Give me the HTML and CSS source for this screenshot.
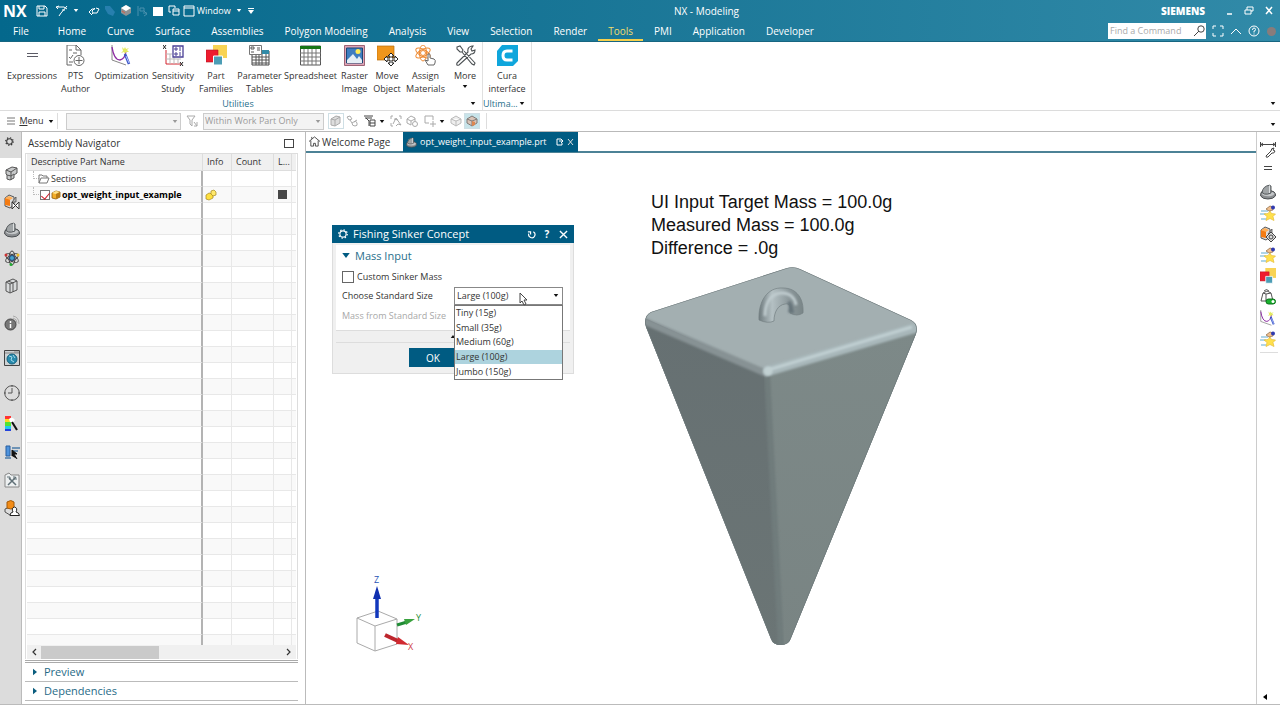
FILE: index.html
```html
<!DOCTYPE html>
<html lang="en">
<head>
<meta charset="utf-8">
<meta name="viewport" content="width=device-width, initial-scale=1">
<title>NX - Modeling</title>
<link rel="stylesheet" href="styles.css">
</head>
<body>
<svg class="defs" aria-hidden="true">
  <symbol id="gear" viewBox="0 0 16 16"><circle cx="8" cy="8" r="5" fill="none" stroke="currentColor" stroke-width="1.800"/><circle cx="8" cy="8" r="6.800" fill="none" stroke="currentColor" stroke-width="2" stroke-dasharray="2.200 3.140"/></symbol>
  <symbol id="caret" viewBox="0 0 6 4"><path d="M0 0h6L3 4z" fill="currentColor"/></symbol>
  <symbol id="caret-right" viewBox="0 0 5 8"><path d="M0 0l5 4-5 4z" fill="currentColor"/></symbol>
  <symbol id="part-gray" viewBox="0 0 16 16"><path d="M.7 10q0-2.500 3.500-3.500l6 0q5 1 5.200 3.500v2q-2 3-7.500 3T.7 12z" fill="#8a8d90" stroke="#4a4e51"/><path d="M1.500 10q1-2 4-2.500l5 0q4 1 4 2.500-2 2.300-6.500 2.300T1.500 10z" fill="#c3c6c8"/><path d="M2 8.500Q3 2 9.500 1.200l1.500.8v7q-4 1.800-6.500 1z" fill="#a0a4a6" stroke="#4a4e51" stroke-width=".9"/><path d="M9.500 1.500V9" stroke="#dcdfe0"/></symbol>
  <symbol id="families" viewBox="0 0 21 21"><path d="M7 0h14v13H7z" fill="#f8d354"/><path d="M0 5h12v12H0z" fill="#ee1c2e" stroke="#b41422" stroke-width=".6"/><path d="M7.500 11h9v9h-9z" fill="#4c9db5" stroke="#fff"/></symbol>
  <symbol id="opt" viewBox="0 0 21 21"><path d="M1 0v15l14 5" fill="none" stroke="#888"/><path d="M1 2q2 13 8 13 5-1 6-9" fill="none" stroke="#8c2aa2" stroke-width="1.300"/><path d="M11 2l2 2 1-2 1 2 3-1-2 2 2 2-3 0-1 2-1-2-3 1 2-2z" fill="#e3ea62"/><path d="M14 9l4 10" stroke="#3954c7" stroke-width="2.500"/><path d="M15 11l3 7" stroke="#b7c6ff"/></symbol>
  <symbol id="person-orange" viewBox="0 0 16 16"><path d="M1 9l5-2 5 2v4l-5 2-5-3z" fill="#ddd" stroke="#555"/><path d="M3 2q4-3 7 0v6q-3 2-7 0z" fill="#f28c17" stroke="#a45b0a"/><path d="M6 15.500q0-3 3-3.500-2-4 1.500-5 3.500 1 1.500 5 3 .5 3.500 3.500z" fill="#fff" stroke="#222"/></symbol>
  <symbol id="blocks" viewBox="0 0 16 16"><path d="M1 4l4-3 5 2v8l-4 3-5-2z" fill="#ddd" stroke="#555"/><path d="M1 4l5 1v7l-5-1z" fill="#f47b12"/><path d="M1 4l4-2 4 2-3 2z" fill="#ffad55"/><path d="M8 8l4-5v5z" fill="#bbb" stroke="#444" stroke-width=".7"/></symbol>
  <symbol id="tools" viewBox="0 0 21 21"><path d="M2 2l3-1 3 4-1 2-2 0-3-3zM7 7l10 12 2 1 1-2L9 6M2 18L13 7q-1-5 4-6l1 0-2 3 1 2 3-1q0 4-4 4L4 20q-3 1-2-2z" fill="#fff" stroke="#4b5053" stroke-width="1.100"/></symbol>
  <symbol id="star" viewBox="0 0 16 16"><path d="M1 6h7M0 9h6M1 14h5" stroke="#63acd2" stroke-width="1.200"/><path d="M10 6l1.500 2.500 4 .5-2.500 2.500 1 4-4-2-4 2 1-4-3-2.500 4-.5z" fill="#ffe04c" stroke="#e5bf3a" stroke-width=".7"/><path d="M6 4l4-3 3 1v3l-4 1z" fill="#efbf8e" stroke="#8b643e" stroke-width=".7"/><circle cx="13" cy="2.500" r="2" fill="#303bb0"/></symbol>
</svg>

<header class="app-header">
  <div class="titlebar">
    <div class="quick">
      <b class="nx">NX</b>
      <button aria-label="Save"><svg class="q" viewBox="0 0 12 12" fill="none" stroke="#fff"><path d="M1 1h8l2 2v8H1zM3 1v3h5V1M3 11V7h6v4"/></svg></button>
      <button aria-label="Undo" class="wide"><svg class="q" viewBox="0 0 12 12" fill="none" stroke="#fff"><path d="M3 1L0 2l2 2M1 2h7l3 2M11 1L5 8l-2 3M6 5h3"/></svg><svg class="c"><use href="#caret"/></svg></button>
      <button aria-label="Redraw"><svg class="q" viewBox="0 0 12 12" fill="none" stroke="#fff"><path d="M3 9L1 7l3-3h3M8 3l3 1-2 4H5l-1-2 3-3M5 8L3 10"/></svg></button>
      <button aria-label="Copy display"><svg class="q" viewBox="0 0 12 12"><path d="M1 1l5 0 5 6-2 4-5-2-3-5z" fill="#277fae"/></svg></button>
      <button aria-label="Shade"><svg class="q" viewBox="0 0 12 12"><path d="M1 3l5-3 5 3v5l-5 3-5-3z" fill="#8c9194"/><path d="M1 3l5-3 5 3-5 3z" fill="#fff"/><path d="M2 6l3 2" stroke="#d35f45"/></svg></button>
      <button aria-label="Repeat"><svg class="q" viewBox="0 0 12 12" fill="none" stroke="#4a91ae"><path d="M2 1v10M4 3h4v3H4zM7 8h4M8 6l3 3-3 2"/></svg></button>
      <button aria-label="Window color"><svg class="q" viewBox="0 0 12 12"><path d="M1 2h10v9H1z" fill="#fff"/></svg></button>
      <button aria-label="Cascade"><svg class="q" viewBox="0 0 12 12" fill="none" stroke="#fff"><path d="M1 7V1h6v2M5 4h6v6H5zM1 7h2M5 6h6"/></svg></button>
      <button class="window-btn"><svg class="q" viewBox="0 0 12 12" fill="none" stroke="#fff"><path d="M1 1h10v10H1zM1 3h10"/></svg>Window<svg class="c"><use href="#caret"/></svg></button>
      <button aria-label="Customize" class="more-q"><svg class="c2" viewBox="0 0 6 6"><path d="M0 0h6v1H0zM0 2h6L3 6z" fill="#fff"/></svg></button>
    </div>
    <h1>NX - Modeling</h1>
    <div class="brand"><b>SIEMENS</b>
      <button aria-label="Minimize"><svg class="q" viewBox="0 0 12 12"><path d="M4 9h5" stroke="#fff" stroke-width="1.500"/></svg></button>
      <button aria-label="Restore"><svg class="q" viewBox="0 0 12 12" fill="none" stroke="#fff"><path d="M4 5V2h6v4H8M2 5h6v4H2z"/></svg></button>
      <button aria-label="Close"><svg class="q" viewBox="0 0 12 12"><path d="M3 2l6 7M9 2L3 9" stroke="#fff" stroke-width="1.500"/></svg></button>
    </div>
  </div>
  <div class="menubar">
    <nav>
      <a href="#" class="file">File</a><a href="#">Home</a><a href="#">Curve</a><a href="#">Surface</a><a href="#">Assemblies</a><a href="#">Polygon Modeling</a><a href="#">Analysis</a><a href="#">View</a><a href="#">Selection</a><a href="#">Render</a><a href="#" class="on">Tools</a><a href="#">PMI</a><a href="#">Application</a><a href="#">Developer</a>
    </nav>
    <div class="find">
      <label class="search"><input type="text" placeholder="Find a Command" aria-label="Find a Command"><svg class="q" viewBox="0 0 12 12" fill="none" stroke="#444"><circle cx="8" cy="4" r="3.200"/><path d="M6 6l-5 5"/></svg></label>
      <button aria-label="Full screen"><svg class="q" viewBox="0 0 12 12" fill="none" stroke="#fff"><path d="M1 4V1h3M8 1h3v3M11 8v3H8M4 11H1V8"/></svg></button>
      <button aria-label="Collapse ribbon"><svg class="q" viewBox="0 0 12 12" fill="none" stroke="#fff"><path d="M1 9l5-5 5 5"/></svg></button>
      <button aria-label="Help"><svg class="q" viewBox="0 0 12 12" fill="none" stroke="#fff"><circle cx="6" cy="6" r="5"/><path d="M4.500 5q0-2 1.500-2t1.500 1.500Q7.500 6 6 6v1.500M6 8.500v1"/></svg></button>
      <i class="dot"></i>
    </div>
  </div>
</header>

<section class="ribbon" aria-label="Tools ribbon">
  <div class="group utilities">
    <div class="tools">
      <button><svg viewBox="0 0 21 21"><path d="M5 8.500h11M5 11.500h11" stroke="#5b5b66"/></svg>Expressions</button>
      <button><svg viewBox="0 0 21 21" fill="none" stroke="#666"><path d="M7 20H2V0h9l5 5v5M11 0v5h5M4 5h3M4 12l1.500 1.500L8 10M4 17h4M8 8h4"/><circle cx="14" cy="15.500" r="5"/><path d="M14 12v7M10.500 15.500h7"/></svg>PTS<br>Author</button>
      <button><svg><use href="#opt"/></svg>Optimization</button>
      <button><svg viewBox="0 0 21 21" fill="none"><path d="M3 5v14h15" stroke="#d3242f"/><path d="M7 9v10M11 9v10M15 14v5M3 9h6M3 14h15" stroke="#bbb"/><path d="M0 0l3 4M3 0L0 4M17 17l3 4M20 17l-3 4" stroke="#222"/><path d="M10 1h10v11H10z" fill="#fff" stroke="#4a3f96" stroke-width="1.300"/><path d="M12 3h2v2h-2zM12 8h2v2h-2zM16 3h2M16 5h2M16 8h2M16 10h2" stroke="#4a3f96"/></svg>Sensitivity<br>Study</button>
      <button><svg><use href="#families"/></svg>Part<br>Families</button>
      <button><svg viewBox="0 0 21 21" fill="none"><path d="M3 9v11h17V6h-7" fill="#fff" stroke="#444"/><path d="M13 5h7v4h-7z" fill="#328ba8"/><path d="M3 12h17M3 15h17M3 18h17M7 10v10M10 10v10M13 9v11M17 9v11" stroke="#555"/><path d="M.5.5h12v9H.5z" fill="#fff" stroke="#777"/><path d="M2 2h3v2H2zM2 7h3M8 3h3M8 5h3" stroke="#555"/></svg>Parameter<br>Tables</button>
      <button><svg viewBox="0 0 21 21"><path d="M.5 1h20v19H.5z" fill="#fff" stroke="#555"/><path d="M0 1h21v3H0z" fill="#187516"/><path d="M0 8h21M0 12h21M0 16h21M4 4v16M8 4v16M12 4v16M16 4v16" stroke="#777"/></svg>Spreadsheet</button>
      <button><svg viewBox="0 0 21 21"><path d="M.5.5h20v20H.5z" fill="#dfa4b5" stroke="#9d6576"/><path d="M2.500 3h16v15h-16z" fill="#3e7dc0" stroke="#194673"/><circle cx="14" cy="6.500" r="2.500" fill="#ffeb56"/><path d="M3 15l6-6 4 5 2-3 3 4v3H3z" fill="#e5eef5"/></svg>Raster<br>Image</button>
      <button><svg viewBox="0 0 21 21"><path d="M0 1h17v14H0z" fill="#f0961c" stroke="#b96d0d" stroke-width=".7"/><path d="M14 8l3 3h-2v2h3v-2l3 3-3 3v-2h-3v3h2l-3 3-3-3h2v-3h-3v2l-3-3 3-3v2h3v-2h-2z" fill="#fff" stroke="#222"/></svg>Move<br>Object</button>
      <button><svg viewBox="0 0 21 21" fill="none" stroke="#ee8b35"><ellipse cx="8" cy="8" rx="8" ry="3.500" transform="rotate(30 8 8)"/><ellipse cx="8" cy="8" rx="8" ry="3.500" transform="rotate(90 8 8)"/><ellipse cx="8" cy="8" rx="8" ry="3.500" transform="rotate(150 8 8)"/><circle cx="8" cy="8" r="2.500" fill="#fff"/><path d="M13 20l-3-5 3 1v-7q2-1 2 1v3l4 1q2 1 1 4l-1 2z" fill="#fff" stroke="#666"/></svg>Assign<br>Materials</button>
      <button><svg><use href="#tools"/></svg>More<svg class="c k"><use href="#caret"/></svg></button>
    </div>
    <div class="group-label">Utilities<svg class="c k end"><use href="#caret"/></svg></div>
  </div>
  <div class="group cura">
    <div class="tools"><button><svg viewBox="0 0 21 21"><path d="M5 0h16v16l-5 5H0V6z" fill="#0fa6dc"/><path d="M15.500 6H10q-4 0-4 4.500t4 4.500h5.500" fill="none" stroke="#fff" stroke-width="3"/></svg>Cura<br>interface</button></div>
    <div class="group-label">Ultima...<svg class="c k end"><use href="#caret"/></svg></div>
  </div>
  <svg class="c k ribbon-end"><use href="#caret"/></svg>
</section>

<section class="selbar" aria-label="Selection bar">
  <button class="menu-btn"><svg viewBox="0 0 8 8"><path d="M0 1h8M0 4h8M0 7h8" stroke="#777"/></svg><span><u>M</u>enu</span><svg class="c k"><use href="#caret"/></svg></button>
  <span class="combo first"><select disabled aria-label="Type filter"><option></option></select><svg class="c"><use href="#caret"/></svg></span>
  <svg class="s" viewBox="0 0 12 12" fill="none" stroke="#aaa"><path d="M1 1h8L6 5v6L4 9V5zM8 7l3 4M11 7v4H8"/></svg>
  <span class="combo second"><select disabled aria-label="Selection scope"><option>Within Work Part Only</option></select><svg class="c"><use href="#caret"/></svg></span>
  <div class="sel-icons">
    <button class="boxed" aria-label="Solid"><svg class="s" viewBox="0 0 12 12" stroke="#aaa"><path d="M1 4l5-3 4 1v6l-5 3-4-1z" fill="#ddd"/><path d="M1 4l4 1v6M5 5l5-3" fill="none"/></svg></button>
    <button aria-label="Link"><svg class="s" viewBox="0 0 12 12" fill="none" stroke="#aaa"><path d="M1 2l3-1 2 3-3 1zM4 5l2 3 5-3M6 8q0 3 3 3t2-3-3-1"/></svg></button>
    <button class="drop" aria-label="Filter"><svg class="s" viewBox="0 0 12 12" fill="none" stroke="#444"><path d="M0 1h9M1 3h7M2 3l3 3v5M6 5h5v6H6zM6 8h5"/></svg><svg class="c k"><use href="#caret"/></svg></button>
    <button aria-label="Deselect"><svg class="s" viewBox="0 0 12 12" fill="none" stroke="#aaa"><path d="M1 4V1h2M1 8v3h2M9 1h2v3M3 9l3-6 5 7-3-1-2 2M4 4l4 1"/></svg></button>
    <button aria-label="Find in navigator"><svg class="s" viewBox="0 0 12 12" fill="none" stroke="#aaa"><path d="M1 4l4-3 4 2v3M1 4v4l4 2M1 4l4 2v4M5 6l4-2"/><circle cx="9" cy="9" r="2.500"/></svg></button>
    <button class="drop" aria-label="Snap"><svg class="s" viewBox="0 0 12 12" fill="none" stroke="#aaa"><path d="M1 8V1h8v4M1 8h4M9 6v6M6 9h6"/></svg><svg class="c k"><use href="#caret"/></svg></button>
    <button aria-label="Wireframe"><svg class="s" viewBox="0 0 12 12" fill="#eee" stroke="#bbb"><path d="M1 4l5-3 5 3v4l-5 3-5-3zM1 4l5 2 5-2M6 6v5"/></svg></button>
    <button class="boxed active" aria-label="Shaded"><svg class="s" viewBox="0 0 12 12" stroke="#807b78"><path d="M1 4l5-3 5 3v4l-5 3-5-3z" fill="#d8c4b8"/><path d="M1 4l5 2 5-2M6 6v5" fill="none"/><path d="M6 6l3 1v3l-3 1z" fill="#dd8750" stroke="none"/></svg></button>
  </div>
  <svg class="c k bar-end"><use href="#caret"/></svg>
</section>

<main>
  <aside class="rail" aria-label="Resource bar">
    <button class="cog" aria-label="Settings"><svg><use href="#gear"/></svg></button>
    <button class="tab" aria-label="Assembly Navigator"><svg viewBox="0 0 16 16" stroke="#555"><path d="M2 5l6-3 5 1v5l-3 2v3l-4 2-3-1v-4l-1-1z" fill="#c8cacb"/><path d="M2 5l5 2v4M7 7l6-4M3 10l4 1v4M7 11l3-2" fill="none"/></svg></button>
    <button aria-label="Constraint Navigator"><svg viewBox="0 0 16 16"><use href="#blocks" width="16" height="16"/><path d="M8 8l7 7V8l-7 7z" fill="#fff" stroke="#333"/></svg></button>
    <button aria-label="Part Navigator"><svg><use href="#part-gray"/></svg></button>
    <button aria-label="Reuse Library"><svg viewBox="0 0 16 16" fill="none" stroke="#444"><ellipse cx="8" cy="8" rx="7" ry="3" transform="rotate(30 8 8)"/><ellipse cx="8" cy="8" rx="7" ry="3" transform="rotate(90 8 8)"/><ellipse cx="8" cy="8" rx="7" ry="3" transform="rotate(150 8 8)"/><circle cx="8" cy="8" r="2.500" fill="#45a3cb" stroke="#247"/><circle cx="2" cy="5" r="1.500" fill="#c33" stroke="none"/><circle cx="14" cy="5" r="1.500" fill="#eb2" stroke="none"/><circle cx="7" cy="14.500" r="1.500" fill="#2a3" stroke="none"/></svg></button>
    <button aria-label="Library"><svg viewBox="0 0 16 16" stroke="#555"><path d="M2 4l7-3 4 2v9l-7 3-4-2z" fill="#d9dbdc"/><path d="M2 4l4 2v9M6 6l7-3M9 5v9M4 3l5 2" fill="none"/></svg></button>
    <button class="tall lead" aria-label="HD3D"><svg viewBox="0 0 16 16"><circle cx="6.500" cy="9.500" r="5.500" fill="#777" stroke="#444"/><path d="M6.500 9v4M6.500 6v2" stroke="#fff" stroke-width="1.500"/><path d="M9 1q6 1 6 8M9 3q4 1 4 5" fill="none" stroke="#aaa"/></svg></button>
    <button class="tall" aria-label="Web Browser"><svg viewBox="0 0 16 16"><path d="M.5.5h15v15H.5z" fill="#cdd2d4" stroke="#444"/><path d="M1 3h14M10 2h5" stroke="#888"/><circle cx="8" cy="9" r="5" fill="#278aad" stroke="#15617d"/><path d="M5 6l3 1-1 3 3 2M9 5l2 3" stroke="#a6dbe9" fill="none"/></svg></button>
    <button class="tall" aria-label="History"><svg viewBox="0 0 16 16" fill="none" stroke="#555"><circle cx="8" cy="8" r="7.300"/><path d="M8 3v5H4M8 0v2M8 14v2M0 8h2M14 8h2"/></svg></button>
    <button aria-label="Process Studio"><svg viewBox="0 0 16 16"><path d="M1 0h6v3H1z" fill="#f33"/><path d="M1 3h6v3H1z" fill="#ffda22"/><path d="M1 6h6v4H1z" fill="#51e333"/><path d="M1 10h6v3H1z" fill="#22c9ec"/><path d="M1 13h6v2H1z" fill="#2443dc"/><path d="M5 3q3-3 6 1l-2 3-3-1z" fill="#fff"/><path d="M8 6l5 8" stroke="#111" stroke-width="2"/></svg></button>
    <button aria-label="Roles"><svg viewBox="0 0 16 16"><path d="M2 2h4v10H2z" fill="#4e93dd" stroke="#275fa0"/><path d="M1 14h6M8 4h8M8 7h6" stroke="#497ba8" stroke-width="1.300"/><path d="M8 12V6l5 4h-3l3 5" fill="#111" stroke="#111"/></svg></button>
    <button aria-label="System tools"><svg viewBox="0 0 16 16"><path d="M1 3l4-2 2 2h8v12H1z" fill="#edf0f1" stroke="#888"/><path d="M5 6l7 7M12 5l-8 8" stroke="#607077" stroke-width="1.500"/><path d="M3 5h3v3M10 4v3h3" fill="none" stroke="#607077"/></svg></button>
    <button aria-label="User role"><svg><use href="#person-orange"/></svg></button>
  </aside>

  <aside class="navigator">
    <div class="nav-title"><h2>Assembly Navigator</h2><button aria-label="Maximize panel"></button></div>
    <div class="tree">
      <div class="rows">
      <table>
        <colgroup><col><col class="w-info"><col class="w-count"><col class="w-l"><col class="w-end"></colgroup>
        <thead><tr><th>Descriptive Part Name</th><th>Info</th><th>Count</th><th>L...</th><th></th></tr></thead>
        <tbody>
          <tr><td><span class="cell"><i class="branch"></i><svg class="folder" viewBox="0 0 12 10" fill="none" stroke="#777"><path d="M1 9V1h3l1 1h4v2M1 9l2-5h8L9 9z"/></svg>Sections</span></td><td></td><td></td><td></td><td></td></tr>
          <tr><td><span class="cell strong"><i class="branch"></i><input type="checkbox" checked aria-label="opt_weight_input_example"><svg viewBox="0 0 10 10"><path d="M1 3l4-2 4 1v5L5 9 1 8z" fill="#f4ae2a" stroke="#8b5b0c" stroke-width=".8"/><path d="M1 3l4 1 4-2-4-1z" fill="#ffe28a"/><path d="M5 4v5l4-2V2z" fill="#b97a14"/></svg>opt_weight_input_example</span></td><td><svg class="info" viewBox="0 0 12 12"><path d="M1 6l3-2 4 1v4l-4 2-3-1z" fill="#ffe040" stroke="#a4861f" stroke-width=".7"/><path d="M6 2l3-1 2 2v3l-3 1-2-2z" fill="#ffe96d" stroke="#a4861f" stroke-width=".7"/></svg></td><td></td><td><i class="swatch"></i></td><td></td></tr>
          <tr><td><td><td><td><td></tr>
          <tr><td><td><td><td><td></tr>
          <tr><td><td><td><td><td></tr>
          <tr><td><td><td><td><td></tr>
          <tr><td><td><td><td><td></tr>
          <tr><td><td><td><td><td></tr>
          <tr><td><td><td><td><td></tr>
          <tr><td><td><td><td><td></tr>
          <tr><td><td><td><td><td></tr>
          <tr><td><td><td><td><td></tr>
          <tr><td><td><td><td><td></tr>
          <tr><td><td><td><td><td></tr>
          <tr><td><td><td><td><td></tr>
          <tr><td><td><td><td><td></tr>
          <tr><td><td><td><td><td></tr>
          <tr><td><td><td><td><td></tr>
          <tr><td><td><td><td><td></tr>
          <tr><td><td><td><td><td></tr>
          <tr><td><td><td><td><td></tr>
          <tr><td><td><td><td><td></tr>
          <tr><td><td><td><td><td></tr>
          <tr><td><td><td><td><td></tr>
          <tr><td><td><td><td><td></tr>
          <tr><td><td><td><td><td></tr>
          <tr><td><td><td><td><td></tr>
          <tr><td><td><td><td><td></tr>
          <tr><td><td><td><td><td></tr>
          <tr><td><td><td><td><td></tr>
        </tbody>
      </table>
      </div>
      <div class="scroll"><svg viewBox="0 0 6 8"><path d="M5 1L2 4l3 3" fill="none" stroke="#333" stroke-width="1.200"/></svg><div class="track"><i></i></div><svg viewBox="0 0 6 8"><path d="M1 1l3 3-3 3" fill="none" stroke="#333" stroke-width="1.200"/></svg></div>
    </div>
    <button class="fold top"><svg><use href="#caret-right"/></svg>Preview</button>
    <button class="fold"><svg><use href="#caret-right"/></svg>Dependencies</button>
  </aside>

  <section class="graphics">
    <div class="tabs">
      <button><svg viewBox="0 0 12 12" fill="none" stroke="#444"><path d="M0 6l6-5 6 5M2 5v6h3V8h2v3h3V5M3 3V1"/></svg>Welcome Page</button>
      <button class="on"><svg><use href="#part-gray"/></svg><span>opt_weight_input_example.prt</span><svg class="x" viewBox="0 0 8 8" fill="none" stroke="#fff"><path d="M5 1H1v6h5V5M3 3h4M5 1l2 2-2 2"/></svg><svg class="x" viewBox="0 0 8 8"><path d="M1 1l5 6M6 1L1 7" stroke="#ddd"/></svg></button>
    </div>
    <div class="canvas">
      <p class="note">UI Input Target Mass = 100.0g<br>Measured Mass = 100.0g<br>Difference = .0g</p>
      <svg class="model" viewBox="640 260 284 392" role="img" aria-label="Sinker model">
        <defs>
          <linearGradient id="lf" x1="0" y1="0" x2="0" y2="1"><stop offset="0" stop-color="#667072"/><stop offset="1" stop-color="#6b7575"/></linearGradient>
          <linearGradient id="rf" x1="0" y1="0" x2="0" y2="1"><stop offset="0" stop-color="#7d8988"/><stop offset="1" stop-color="#798483"/></linearGradient>
          <linearGradient id="ring" x1="0" x2="1" y1="0" y2="0"><stop offset="0" stop-color="#707c7f"/><stop offset=".3" stop-color="#b4c0c3"/><stop offset=".7" stop-color="#8a9699"/><stop offset="1" stop-color="#7a8688"/></linearGradient>
          <filter id="b1" x="-20%" y="-20%" width="140%" height="140%"><feGaussianBlur stdDeviation="1.300"/></filter>
          <clipPath id="body"><path d="M651 312L787 268q7-2 13 1l111 51q8 4 5 14L791 638q-2 7-10 7t-10-6L646 327q-3-11 5-15z"/></clipPath>
        </defs>
        <g clip-path="url(#body)">
          <path d="M640 260h284v392H640z" fill="#a3afb1"/>
          <path d="M640 316l128 58 14 280H640z" fill="url(#lf)"/>
          <path d="M768 374l156-48-120 326h-23z" fill="url(#rf)"/>
          <path d="M767 372l14 275" stroke="#707b7c" stroke-width="6" filter="url(#b1)"/>
          <path d="M644 321l124 53" stroke="#879294" stroke-width="7" filter="url(#b1)"/>
          <path d="M768 371l147-43" stroke="#a8b7ba" stroke-width="10" stroke-linecap="round" filter="url(#b1)"/>
          <path d="M768 370l144-43" stroke="#c1d0d3" stroke-width="3" filter="url(#b1)"/>
          <circle cx="768" cy="371" r="4.500" fill="#c1d0d2" filter="url(#b1)"/>
          <path d="M651 312L787 268q7-2 13 1l111 51q8 4 5 14L791 638q-2 7-10 7t-10-6L646 327q-3-11 5-15z" fill="none" stroke="#6e797b" stroke-width="1.200"/>
        </g>
        <path d="M759 320c-1-18 8-33 24-32 14 0 21 11 20 25q-6 4-13 0c1-7-1-10-5-9-7 1-11 8-11 17q-6 3-15-1z" fill="url(#ring)" stroke="#748083" stroke-width=".7"/>
        <path d="M765 316c0-13 6-23 17-23 8 0 13 5 14 12" fill="none" stroke="#c0cccf" stroke-width="3" filter="url(#b1)"/>
        <path d="M787 303q3 2 1 9 3 2 6 1-1-9-4-12z" fill="#66747a" filter="url(#b1)"/>
      </svg>
      <svg class="triad" viewBox="0 0 76 80" role="img" aria-label="View triad">
        <path d="M6 40l21-7 19 8-22 7zM6 40v25l18 8V48M24 73l22-7V41" fill="#fff" stroke="#aaa"/>
        <path d="M26 40V19" stroke="#1238bd" stroke-width="3.500"/><path d="M26 8l4 13h-8z" fill="#1030b0"/>
        <path d="M46 47l10-3" stroke="#218c36" stroke-width="3"/><path d="M53 41l11 0-9 6z" fill="#39a23e"/>
        <path d="M34 57l13 6" stroke="#bd262d" stroke-width="4"/><path d="M47 59l11 8-13-1z" fill="#d12a30"/>
        <text x="23" y="5" fill="#2a55b5">Z</text><text x="65" y="43" fill="#2b9140">Y</text><text x="57" y="72" fill="#cf4144">X</text>
      </svg>

      <form class="dialog" onsubmit="return false">
        <header><svg><use href="#gear"/></svg><h2>Fishing Sinker Concept</h2>
          <button type="button" aria-label="Reset"><svg viewBox="0 0 10 10"><path d="M7 2a3.500 3.500 0 1 1-5 2M1 2h3v3" fill="none" stroke="#fff" stroke-width="1.300"/></svg></button><button type="button" aria-label="Help">?</button><button type="button" aria-label="Close"><svg viewBox="0 0 10 10"><path d="M1 1l8 8M9 1L1 9" stroke="#fff" stroke-width="1.500"/></svg></button></header>
        <div class="body">
          <h3><svg class="c"><use href="#caret"/></svg>Mass Input</h3>
          <label class="check"><input type="checkbox">Custom Sinker Mass</label>
          <div class="row"><label for="size">Choose Standard Size</label>
            <span class="size"><select id="size"><option>Large (100g)</option></select><svg class="c k"><use href="#caret"/></svg>
              <ul role="listbox" aria-label="Standard sizes"><li role="option">Tiny (15g)</li><li role="option">Small (35g)</li><li role="option">Medium (60g)</li><li role="option" aria-selected="true">Large (100g)</li><li role="option">Jumbo (150g)</li></ul>
              <svg class="cursor" viewBox="0 0 9 14"><path d="M1 1v10l2-2 2 4 2-1-2-4h3z" fill="#fff" stroke="#444"/></svg>
            </span></div>
          <p class="dim">Mass from Standard Size</p>
        </div>
        <div class="strip"><svg class="c k"><use href="#caret"/></svg></div>
        <footer><button class="ok">OK</button></footer>
      </form>
    </div>
  </section>

  <aside class="dock" aria-label="Side toolbar">
    <button aria-label="Measure"><svg viewBox="0 0 16 16" fill="none" stroke="#444"><path d="M.5 0v5M15.500 0v5M1 2.500h14M3 1L1 2.500 3 4M13 1l2 1.500L13 4"/><path d="M6 14l5-5q0-3 3-3l-1 2 2 1q-1 3-3 2l-4 4q-2 1-2-1z"/></svg></button>
    <button aria-label="Expressions"><svg viewBox="0 0 16 16"><path d="M4 3.500h8M4 6.500h8" stroke="#444"/></svg></button>
    <button aria-label="Part"><svg><use href="#part-gray"/></svg></button>
    <button aria-label="Effect one"><svg><use href="#star"/></svg></button>
    <button aria-label="Move component"><svg viewBox="0 0 16 16"><use href="#blocks" width="16" height="16"/><path d="M11 6l5 5-5 5-5-5z" fill="#ddd" stroke="#444"/><circle cx="11" cy="11" r="2" fill="none" stroke="#444"/></svg></button>
    <button aria-label="Effect two"><svg><use href="#star"/></svg></button>
    <button aria-label="Part Families"><svg><use href="#families"/></svg></button>
    <button aria-label="Toggle weight"><svg viewBox="0 0 16 16"><path d="M1 12l2-8 4-2 4 2 2 8zM3 4l3 1 5-1M6 5v7M4 2q2.500-3 5 0" fill="#fff" stroke="#555"/><rect x="6" y="10" width="9.500" height="5" rx="2.500" fill="#18b12d" stroke="#0a6f18"/><circle cx="13" cy="12.500" r="1.500" fill="#fff"/></svg></button>
    <button aria-label="Optimization"><svg><use href="#opt"/></svg></button>
    <button aria-label="Effect three"><svg><use href="#star"/></svg></button>
    <i class="rule"></i>
    <svg class="dock-end" viewBox="0 0 4 6"><path d="M4 0v6L0 3z"/></svg>
  </aside>
</main>
<footer class="status"></footer>
</body>
</html>
```
FILE: styles.css
```css
* { box-sizing: border-box; }
html, body { height: 100%; }
body {
  margin: 0;
  display: flex;
  flex-direction: column;
  background: #fff;
  color: #333;
  font: 9px/12px "Open Sans", "Noto Sans", sans-serif;
  overflow: hidden;
}
h1, h2, h3, p, ul { margin: 0; padding: 0; font-weight: 400; }
button { margin: 0; padding: 0; border: 0; background: none; color: inherit; font: inherit; display: flex; align-items: center; justify-content: center; }
a { color: inherit; text-decoration: none; }
svg { display: block; flex: none; }
input, select { font: inherit; color: inherit; margin: 0; }
.defs { position: absolute; width: 0; height: 0; }
.c { width: 6px; height: 3px; }
.k { color: #111; }
.q, .s { width: 12px; height: 12px; }

/* header */
.app-header { background: linear-gradient(90deg, #04688c, #1d7999 55%, #318aa8); color: #fff; border-bottom: 1px solid #176681; font-size: 10px; line-height: 14px; }
.titlebar { height: 21px; display: flex; align-items: center; }
.quick { display: flex; align-items: center; gap: 4px; width: 252px; }
.nx { font-size: 16px; width: 28px; margin: 0 5px 0 3px; }
.quick .wide { gap: 5px; margin: 0 5px 0 4px; }
.quick button + button { flex: none; }
.window-btn { gap: 2px; margin-left: -1px; font-size: 9px; }
.window-btn .c { margin-left: 3px; }
.more-q { margin-left: 2px; }
.c2 { width: 6px; height: 6px; }
.titlebar h1 { flex: 1; text-align: center; font-size: 10px; }
.brand { display: flex; align-items: center; gap: 8px; padding-right: 5px; }
.brand b { font-weight: 800; margin-right: 10px; }
.menubar { height: 20px; display: flex; justify-content: space-between; }
nav { display: flex; gap: 1px; }
nav a { padding: 3px 10px 0; height: 20px; }
nav .file { padding: 3px 18px 0 13px; }
nav .on { color: #f3dd6d; border-bottom: 2px solid #f5d04c; }
.find { display: flex; align-items: center; gap: 6px; padding-right: 4px; }
.search { display: flex; align-items: center; width: 98px; height: 16px; background: #fff; padding-right: 1px; }
.search input { flex: 1; width: 0; border: 0; padding: 0 2px; background: none; font-size: 9px; color: #333; outline: 0; }
.search input::placeholder { color: #aaa; opacity: 1; }
.dot { width: 9px; height: 9px; border-radius: 50%; background: #887c7b; margin-left: 1px; }

/* ribbon */
.ribbon { flex: none; height: 69px; display: flex; border-bottom: 1px solid #dcdcdc; }
.group { display: flex; flex-direction: column; justify-content: space-between; border-right: 1px solid #e0e0e0; }
.utilities { padding-left: 6px; }
.tools { display: grid; }
.utilities .tools { grid-template-columns: 52px 35px 57px 46px 40px 47px 55px 33px 32px 45px 34px; }
.cura { width: 49px; }
.tools button { flex-direction: column; justify-content: flex-start; padding-top: 3px; line-height: 13px; white-space: nowrap; }
.tools button > svg:first-child { width: 21px; height: 21px; margin-bottom: 3px; }
.tools .c { margin-top: 3px; }
.group-label { display: flex; align-items: center; justify-content: center; color: #28708c; line-height: 13px; }
.group-label .end { margin-left: auto; margin-right: 6px; }
.utilities .group-label::before { content: ""; margin-left: auto; }
.ribbon-end, .bar-end { margin: auto 4px 5px auto; }

/* selection bar */
.selbar { flex: none; height: 21px; display: flex; align-items: center; border-bottom: 1px solid #b9b9b9; }
.menu-btn { gap: 4px; width: 58px; height: 16px; padding-left: 4px; border-right: 1px solid #ddd; margin-right: 8px; }
.menu-btn > svg:first-child { width: 8px; height: 8px; }
.combo { position: relative; display: flex; height: 17px; }
.combo select { appearance: none; width: 100%; border: 1px solid #ccc; background: #f3f3f3; color: #9b9b9b; padding: 0 1px; opacity: 1; }
.combo .c { position: absolute; right: 3px; top: 7px; color: #999; }
.first { width: 115px; }
.second { width: 121px; }
.selbar > .s { margin: 0 5px; }
.sel-icons { display: flex; align-items: center; margin-left: 4px; padding-right: 6px; border-right: 1px solid #ddd; }
.sel-icons button { width: 16px; height: 16px; }
.sel-icons .drop { width: 28px; gap: 3px; }
.sel-icons .boxed { border: 1px solid #cfdfe5; }
.sel-icons .active { background: #c8e4ea; }

/* work area */
main { flex: 1; min-height: 0; display: flex; border-bottom: 1px solid #bbb; }
.status { flex: none; height: 15px; }
.rail { width: 22px; flex: none; background: #dcdcdc; border-right: 1px solid #bbb; }
.rail button { width: 100%; height: 28px; padding-left: 3px; }
.rail svg { width: 16px; height: 16px; }
.rail .cog { height: 26px; padding: 0 2px 8px 0; }
.rail .cog svg { width: 9px; height: 9px; }
.rail .tab { height: 30px; background: #fff; padding-left: 2px; }
.rail .tall { height: 35px; }
.rail .lead { margin-top: 5px; }

.navigator { width: 284px; flex: none; display: flex; flex-direction: column; padding: 0 7px 3px 3px; border-right: 1px solid #bbb; }
.nav-title { display: flex; align-items: center; height: 21px; padding: 1px 4px 0 3px; justify-content: space-between; }
.nav-title h2 { font-size: 10px; }
.nav-title button { width: 10px; height: 9px; border: 1px solid #444; }
.tree { flex: 1; min-height: 0; display: flex; flex-direction: column; border: 1px solid #ddd; border-bottom: 0; padding: 0 1px; }
.rows { flex: 1; min-height: 0; overflow: hidden; }
table { width: 100%; table-layout: fixed; border-collapse: separate; border-spacing: 0; }
.w-info { width: 29px; }
.w-count { width: 42px; }
.w-l { width: 18px; }
.w-end { width: 4px; }
th { height: 17px; background: #f0f0f0; padding: 0 0 0 4px; text-align: left; font-weight: 400; border-right: 1px solid #ddd; border-bottom: 1px solid #ddd; white-space: nowrap; }
td { height: 16px; padding: 0; border-right: 1px solid #e8e8e8; border-bottom: 1px solid #e8e8e8; }
tbody tr:nth-child(even) { background: #f9f9f9; }
td:first-child { border-right: 2px solid #b3b3b3; }
th:last-child { padding: 0; }
th:last-child, td:last-child { border-right: 0; }
.cell { display: flex; align-items: center; gap: 1px; padding-left: 6px; height: 15px; }
.cell svg { width: 10px; height: 10px; }
.cell .folder { width: 12px; margin-left: -2px; }
.branch { width: 6px; height: 8px; border-bottom: 1px dotted #bbb; border-left: 1px dotted #bbb; margin-bottom: 7px; }
.strong { font-weight: 700; color: #000; }
.cell input { appearance: none; width: 10px; height: 10px; border: 1px solid #777; background: #fff; display: grid; place-items: center; }
.cell input::before { content: ""; width: 4px; height: 7px; border: solid #d21f2b; border-width: 0 1px 1px 0; transform: rotate(40deg); }
.info { width: 12px; height: 12px; margin-left: 2px; }
.swatch { display: block; width: 9px; height: 9px; background: #484848; margin-left: 4px; }
.scroll { height: 14px; display: flex; align-items: center; gap: 4px; padding: 0 4px; background: #f0f0f0; }
.scroll svg { width: 6px; height: 8px; }
.track { flex: 1; height: 13px; }
.track i { display: block; width: 49%; height: 100%; background: #cacaca; }
.fold { height: 19px; justify-content: flex-start; gap: 7px; padding-left: 8px; color: #1f6a87; font-size: 11px; border-bottom: 1px solid #bbb; }
.fold.top { margin-top: 1px; height: 22px; border-top: 3px double #aaa; }
.fold svg { width: 4px; height: 8px; color: #0a5d7e; }

.graphics { flex: 1; min-width: 0; display: flex; flex-direction: column; }
.tabs { height: 21px; flex: none; display: flex; border-bottom: 2px solid #4c8296; font-size: 10px; }
.tabs button { padding: 0 3px; gap: 2px; width: 97px; justify-content: flex-start; white-space: nowrap; }
.tabs svg { width: 11px; height: 11px; }
.tabs .on { width: 175px; height: 20px; background: #005b82; color: #fff; gap: 3px; font-size: 9px; }
.tabs .on span { flex: 1; text-align: left; }
.tabs .x { width: 8px; height: 8px; }
.canvas { flex: 1; position: relative; background: #fff; overflow: hidden; }
.note { position: absolute; left: 345px; top: 38px; font: 18px/23px "Liberation Sans", Arial, sans-serif; color: #111; white-space: nowrap; }
.model { position: absolute; left: 334px; top: 107px; width: 284px; height: 392px; }
.triad { position: absolute; left: 45px; top: 425px; width: 76px; height: 80px; overflow: visible; }
.triad text { font-size: 9px; }

.dialog { position: absolute; left: 26px; top: 72px; width: 242px; background: #f0f0f0; border: 1px solid #ddd; border-top: 0; }
.dialog header { height: 18px; display: flex; align-items: center; gap: 4px; padding: 0 6px; background: #005b82; color: #fff; margin: 0 -1px; }
.dialog header > svg { width: 10px; height: 10px; }
.dialog header h2 { flex: 1; font-size: 11px; padding-left: 1px; }
.dialog header button { width: 10px; font-weight: 700; font-size: 10px; }
.dialog header button + button { margin-left: 2px; }
.dialog header button svg { width: 9px; height: 9px; }
.body { margin: 2px 3px 0; padding: 2px 6px 8px; background: #fff; border-bottom: 1px solid #ddd; }
.body h3 { display: flex; align-items: center; gap: 5px; height: 17px; font-size: 11px; color: #28708c; }
.body h3 .c { width: 8px; height: 5px; color: #005b82; }
.check { display: flex; align-items: center; gap: 3px; height: 23px; padding-top: 3px; }
.check input { appearance: none; width: 12px; height: 12px; border: 1px solid #666; background: #fff; }
.row { display: flex; align-items: center; justify-content: space-between; height: 18px; padding-right: 1px; }
.size { position: relative; width: 109px; height: 18px; display: block; }
.size select { appearance: none; width: 100%; height: 100%; border: 1px solid #888; background: #fff; padding: 0 2px; border-radius: 0; }
.size .c { position: absolute; right: 4px; top: 7px; }
.size ul { position: absolute; z-index: 2; left: 0; top: 18px; width: 109px; height: 75px; list-style: none; background: #fff; border: 1px solid #777; display: flex; flex-direction: column; }
.size li { flex: 1; padding-left: 1px; display: flex; align-items: center; }
.size [aria-selected] { background: #add3de; }
.cursor { position: absolute; z-index: 3; left: 65px; top: 5px; width: 9px; height: 14px; }
.dim { color: #a8a8a8; padding-top: 5px; }
.strip { height: 12px; margin: 0 3px; border-bottom: 1px solid #ddd; display: grid; place-items: center; }
.strip .c { transform: rotate(180deg); }
.dialog footer { padding: 5px 0 6px 76px; }
.ok { width: 48px; height: 19px; background: #005b82; color: #fff; font-size: 10px; }

.dock { width: 24px; flex: none; border-left: 1px solid #ccc; padding: 10px 0 4px 3px; display: flex; flex-direction: column; gap: 5px; }
.dock button { width: 16px; height: 16px; }
.dock svg { width: 16px; height: 16px; }
.rule { width: 18px; border-top: 1px solid #ddd; }
.dock .dock-end { width: 4px; height: 6px; margin: auto 0 0 3px; }
```
